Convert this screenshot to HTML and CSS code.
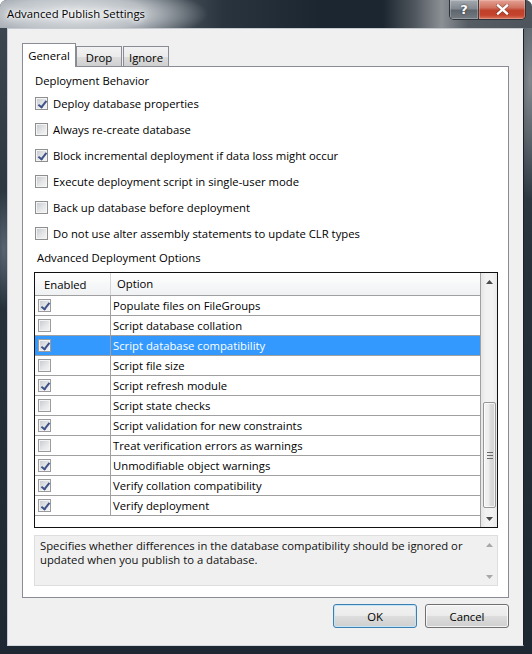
FILE: index.html
```html
<!DOCTYPE html>
<html>
<head>
<meta charset="utf-8">
<title>Advanced Publish Settings</title>
<link rel="stylesheet" href="styles.css">
</head>
<body>
<div class="window">
  <div class="titlebar">
    <span class="title">Advanced Publish Settings</span>
    <div class="caption-buttons">
      <div class="cbtn help">?</div>
      <div class="cbtn close">
        <svg width="13" height="11" viewBox="0 0 13 11"><path d="M2 1.5 L11 9.5 M11 1.5 L2 9.5" stroke="#3a1a14" stroke-width="3.6" stroke-linecap="square" opacity="0.45"/><path d="M2 1.5 L11 9.5 M11 1.5 L2 9.5" stroke="#fff" stroke-width="2.4" stroke-linecap="square"/></svg>
      </div>
    </div>
  </div>
  <div class="client">
    <div class="tabs">
      <div class="tab active">General</div>
      <div class="tab drop">Drop</div>
      <div class="tab ignore">Ignore</div>
    </div>
    <div class="panel">
      <div class="group-label">Deployment Behavior</div>
      <div class="check-list">
        <div class="check-row"><span class="cb on"></span><span>Deploy database properties</span></div>
        <div class="check-row"><span class="cb"></span><span>Always re-create database</span></div>
        <div class="check-row"><span class="cb on"></span><span>Block incremental deployment if data loss might occur</span></div>
        <div class="check-row"><span class="cb"></span><span>Execute deployment script in single-user mode</span></div>
        <div class="check-row"><span class="cb"></span><span>Back up database before deployment</span></div>
        <div class="check-row"><span class="cb"></span><span>Do not use alter assembly statements to update CLR types</span></div>
      </div>
      <div class="group-label adv">Advanced Deployment Options</div>
      <div class="grid">
        <div class="grid-rows">
          <div class="grow head"><div class="c1">Enabled</div><div class="c2">Option</div></div>
          <div class="grow"><div class="c1"><span class="cb sm on"></span></div><div class="c2">Populate files on FileGroups</div></div>
          <div class="grow"><div class="c1"><span class="cb sm"></span></div><div class="c2">Script database collation</div></div>
          <div class="grow sel"><div class="c1"><span class="cb sm on"></span></div><div class="c2">Script database compatibility</div></div>
          <div class="grow"><div class="c1"><span class="cb sm"></span></div><div class="c2">Script file size</div></div>
          <div class="grow"><div class="c1"><span class="cb sm on"></span></div><div class="c2">Script refresh module</div></div>
          <div class="grow"><div class="c1"><span class="cb sm"></span></div><div class="c2">Script state checks</div></div>
          <div class="grow"><div class="c1"><span class="cb sm on"></span></div><div class="c2">Script validation for new constraints</div></div>
          <div class="grow"><div class="c1"><span class="cb sm"></span></div><div class="c2">Treat verification errors as warnings</div></div>
          <div class="grow"><div class="c1"><span class="cb sm on"></span></div><div class="c2">Unmodifiable object warnings</div></div>
          <div class="grow"><div class="c1"><span class="cb sm on"></span></div><div class="c2">Verify collation compatibility</div></div>
          <div class="grow"><div class="c1"><span class="cb sm on"></span></div><div class="c2">Verify deployment</div></div>
        </div>
        <div class="vscroll">
          <div class="sb-btn"><svg width="7" height="4" viewBox="0 0 7 4"><path d="M0 4 L3.5 0 L7 4 Z" fill="#4a4a4a"/></svg></div>
          <div class="sb-track"><div class="thumb"><div class="grip"></div></div></div>
          <div class="sb-btn"><svg width="7" height="4" viewBox="0 0 7 4"><path d="M0 0 L3.5 4 L7 0 Z" fill="#4a4a4a"/></svg></div>
        </div>
      </div>
      <div class="desc">
        <div class="desc-text">Specifies whether differences in the database compatibility should be ignored or<br>updated when you publish to a database.</div>
        <div class="vscroll dis">
          <div class="sb-btn"><svg width="7" height="4" viewBox="0 0 7 4"><path d="M0 4 L3.5 0 L7 4 Z" fill="#a8a8a8"/></svg></div>
          <div class="sb-track"></div>
          <div class="sb-btn"><svg width="7" height="4" viewBox="0 0 7 4"><path d="M0 0 L3.5 4 L7 0 Z" fill="#a8a8a8"/></svg></div>
        </div>
      </div>
    </div>
    <div class="buttons">
      <button class="btn ok">OK</button>
      <button class="btn">Cancel</button>
    </div>
  </div>
</div>
</body>
</html>
```

FILE: styles.css
```css
* { box-sizing: border-box; }
html, body { margin: 0; padding: 0; }
body {
  width: 532px;
  height: 654px;
  overflow: hidden;
  background: #fff;
  font-family: "Open Sans", "Noto Sans", sans-serif;
  font-size: 11.3px;
  color: #000;
}

.window {
  width: 532px;
  height: 654px;
  display: flex;
  flex-direction: column;
  border-radius: 7px 7px 0 0;
  overflow: hidden;
  background:
    radial-gradient(ellipse 14px 60px at 4px 250px, rgba(150,165,180,0.45), rgba(0,0,0,0)),
    radial-gradient(ellipse 20px 120px at 530px 80px, rgba(140,145,150,0.9), rgba(0,0,0,0)),
    linear-gradient(to bottom, #3d4853 0%, #26313b 40%, #1e2832 100%);
}

.titlebar {
  height: 28px;
  flex: none;
  display: flex;
  justify-content: space-between;
  align-items: flex-start;
  background:
    radial-gradient(ellipse 130px 30px at 78px 14px, rgba(236,238,240,0.95) 0%, rgba(205,210,215,0.8) 55%, rgba(0,0,0,0) 100%),
    linear-gradient(to right, #8a9299 0%, #6a737b 22%, #2a343e 42%, #1c2630 60%, #1c2630 72%, #50575e 78%, #8b9095 83%, #555c63 88%, #4d545b 100%);
}
.title {
  padding-left: 7px;
  line-height: 27px;
  color: #000;
  text-shadow: 0 0 6px #fff, 0 0 10px #fff, 0 0 3px #fff;
}
.caption-buttons {
  display: flex;
  margin-right: 6px;
  border: 1px solid #2c3237;
  border-top: none;
  border-radius: 0 0 5px 5px;
  overflow: hidden;
}
.cbtn {
  height: 19px;
  display: flex;
  align-items: center;
  justify-content: center;
}
.help {
  width: 29px;
  color: #fff;
  font-family: "DejaVu Sans", sans-serif;
  font-weight: bold;
  font-size: 13px;
  text-shadow: 0 0 2px #222;
  border-right: 1px solid #3a3f44;
  background: linear-gradient(to bottom, #a4aab0 0%, #828990 45%, #5f666d 55%, #737a80 100%);
  box-shadow: inset 0 0 0 1px rgba(255,255,255,0.25);
}
.close {
  width: 46px;
  background: linear-gradient(to bottom, #e3a193 0%, #d07260 40%, #c0402a 55%, #c5432c 80%, #d8765f 100%);
  box-shadow: inset 0 0 0 1px rgba(255,220,210,0.3);
}

.client {
  flex: 1;
  margin: 0 8px 8px 7px;
  background: #f0f0f0;
  border: 1px solid;
  border-color: #c5cbd1 #1b2127 #d5d8db #c5cbd1;
  padding: 14px 14px 17px 14px;
  display: flex;
  flex-direction: column;
}

.tabs {
  height: 23px;
  display: flex;
  align-items: flex-end;
  flex: none;
}
.tab {
  height: 20px;
  border: 1px solid #898c95;
  border-bottom: none;
  display: flex;
  align-items: center;
  justify-content: center;
  background: linear-gradient(to bottom, #f2f2f2 0%, #ebebeb 50%, #dddddd 51%, #cfcfcf 100%);
  padding-top: 1px;
}
.tab.active {
  width: 54px;
  height: 24px;
  margin-bottom: -1px;
  background: #fff;
  position: relative;
  z-index: 1;
  padding-top: 0;
  padding-bottom: 1px;
}
.tab.drop { width: 46px; margin-left: 0; }
.tab.ignore { width: 46px; margin-left: 1px; }

.panel {
  height: 532px;
  flex: none;
  border: 1px solid #898c95;
  background: #fff;
  padding: 6px 10px 0 11px;
}
.group-label {
  line-height: 16px;
  height: 16px;
  padding-left: 1px;
}
.group-label.adv {
  margin-top: 4px;
  padding-left: 3px;
}
.check-list {
  margin-top: 1px;
}
.check-row {
  height: 26px;
  display: flex;
  align-items: center;
  gap: 5px;
  padding-left: 1px;
}

.cb {
  width: 13px;
  height: 13px;
  flex: none;
  display: inline-block;
  position: relative;
  border: 1px solid #8e8f8f;
  background: linear-gradient(135deg, #c4c8cd 0%, #e4e6e8 55%, #f6f6f6 100%);
  box-shadow: inset 0 0 0 1px #f4f4f4;
}
.cb.on::after {
  content: "";
  position: absolute;
  left: 4px;
  top: 1px;
  width: 3px;
  height: 7px;
  border: solid #3f5189;
  border-width: 0 2px 2px 0;
  transform: rotate(38deg);
}
.cb.sm {
  width: 13px;
  height: 13px;
  border-color: #9a9b9c;
}

.grid {
  margin-top: 6px;
  width: 464px;
  height: 256px;
  border: 1px solid #111;
  display: flex;
}
.grid-rows {
  flex: 1;
  border-right: 1px solid #a0a0a0;
}
.grow {
  height: 20px;
  display: flex;
  border-bottom: 1px solid #a0a0a0;
}
.grow.head {
  height: 23px;
  background: linear-gradient(to bottom, #ffffff 0%, #f7f8f9 50%, #f0f1f2 100%);
}
.c1 {
  width: 76px;
  flex: none;
  border-right: 1px solid #a0a0a0;
  padding-left: 3px;
  display: flex;
  align-items: center;
}
.c2 {
  flex: 1;
  padding-left: 2px;
  padding-bottom: 1px;
  display: flex;
  align-items: center;
  white-space: nowrap;
}
.head .c1 {
  padding-left: 9px;
  border-right-color: #d5d5d5;
}
.head .c2 { padding-left: 6px; }
.grow.sel .c2 {
  background: #3399ff;
  color: #fff;
}
.grow.sel .c1 {
  background: #3399ff;
}

.vscroll {
  width: 16px;
  flex: none;
  display: flex;
  flex-direction: column;
  background: linear-gradient(to right, #e6e6e6 0%, #f2f2f2 30%, #f2f2f2 70%, #e9e9e9 100%);
}
.sb-btn {
  height: 17px;
  flex: none;
  display: flex;
  align-items: center;
  justify-content: center;
}
.sb-track {
  flex: 1;
}
.thumb {
  margin-top: 112px;
  margin-left: 2px;
  width: 13px;
  height: 106px;
  border: 1px solid #979797;
  border-radius: 2px;
  background: linear-gradient(to right, #f4f4f4 0%, #ececec 45%, #dcdcdc 55%, #d2d2d2 100%);
  box-shadow: inset 0 0 0 1px rgba(255,255,255,0.7);
  display: flex;
  align-items: center;
  justify-content: center;
}
.grip {
  width: 6px;
  height: 7px;
  background: repeating-linear-gradient(to bottom, #6a6a6a 0, #6a6a6a 1px, transparent 1px, transparent 3px);
}

.desc {
  margin-top: 7px;
  width: 464px;
  height: 51px;
  border: 1px solid #dedede;
  background: #f0f0f0;
  display: flex;
}
.desc-text {
  flex: 1;
  padding: 3px 0 0 5px;
  line-height: 14px;
  white-space: nowrap;
  color: #111;
}
.vscroll.dis {
  background: #f0f0f0;
}

.buttons {
  margin-top: 6px;
  display: flex;
  justify-content: flex-end;
  gap: 8px;
}
.btn {
  width: 84px;
  height: 24px;
  margin: 0;
  padding: 0;
  font-family: "Open Sans", "Noto Sans", sans-serif;
  font-size: 11.3px;
  color: #000;
  border: 1px solid #707070;
  border-radius: 3px;
  background: linear-gradient(to bottom, #f2f2f2 0%, #ebebeb 50%, #dddddd 51%, #cfcfcf 100%);
  box-shadow: inset 0 0 0 1px rgba(255,255,255,0.75);
}
.btn.ok {
  border-color: #3c7fb1;
  box-shadow: inset 0 0 0 1px #c4e5f6;
}
```
